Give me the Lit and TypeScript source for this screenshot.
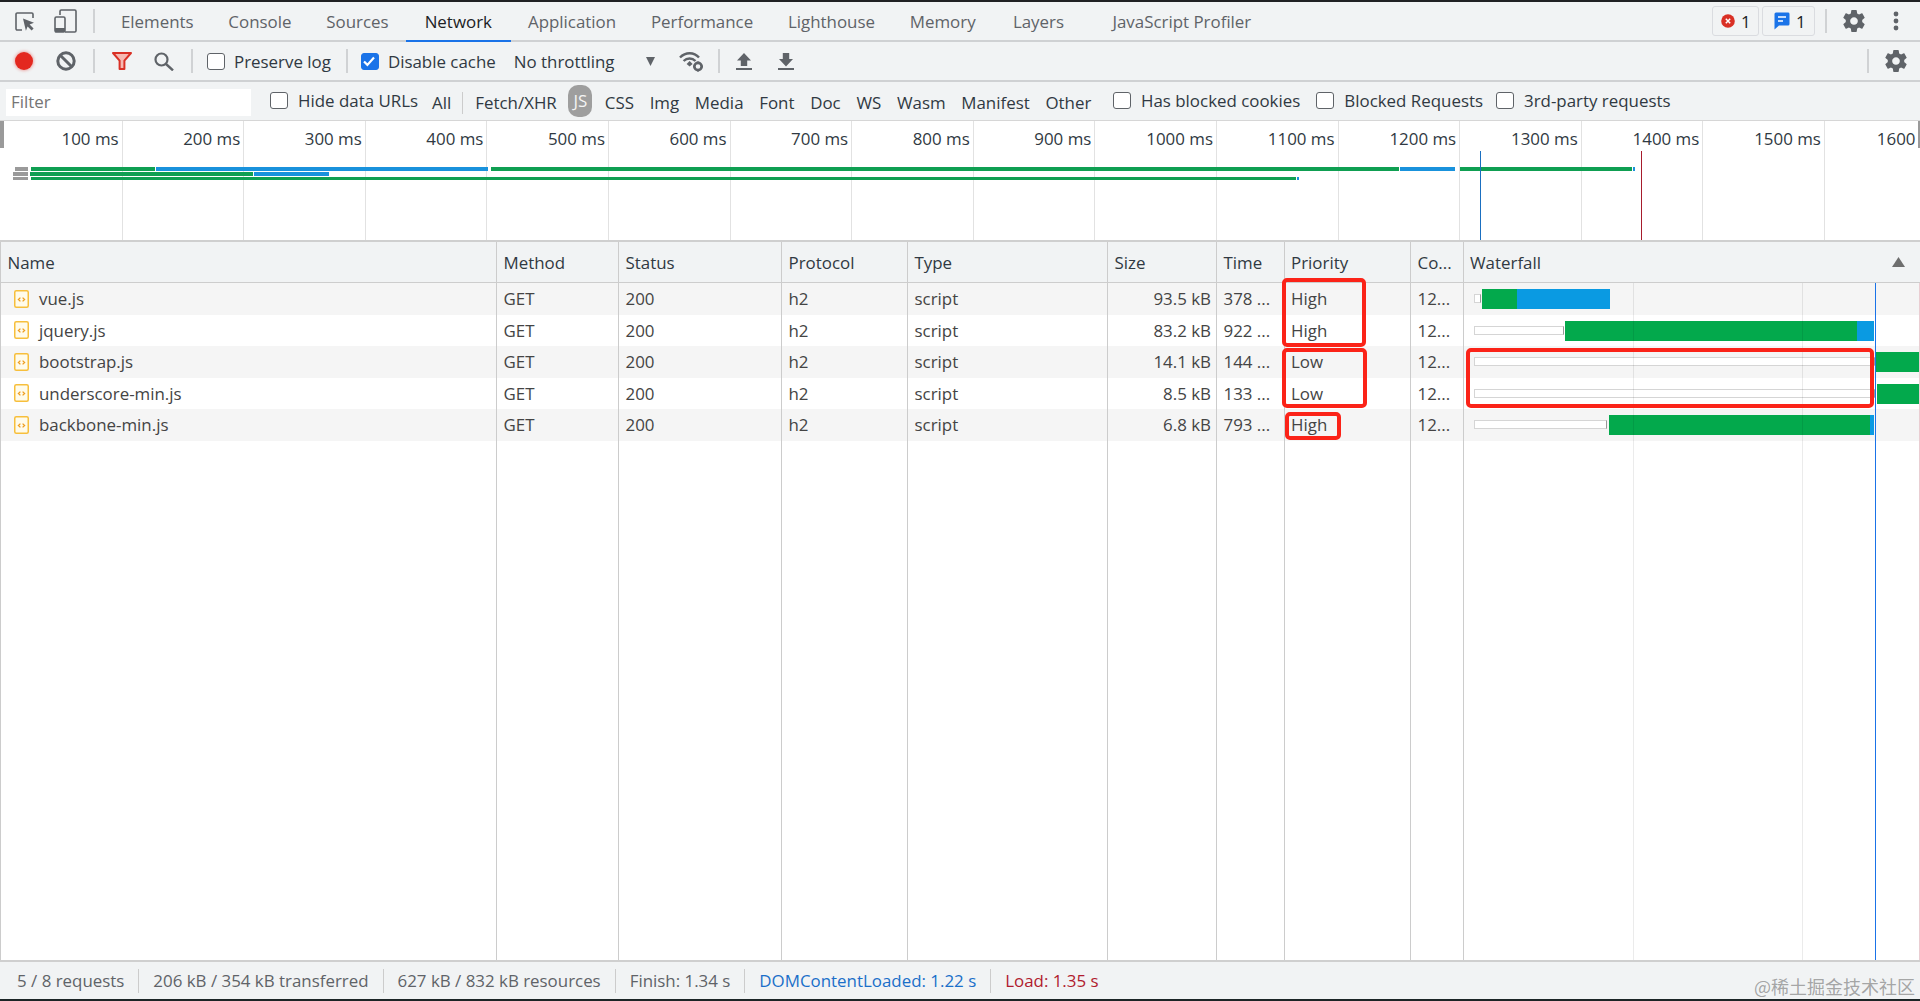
import { LitElement, html, css } from "lit";
import { customElement } from "lit/decorators.js";

const GEAR =
    "M19.43 12.98c.04-.32.07-.64.07-.98s-.03-.66-.07-.98l2.11-1.65c.19-.15.24-.42.12-.64l-2-3.46c-.12-.22-.39-.3-.61-.22l-2.49 1c-.52-.4-1.08-.73-1.69-.98l-.38-2.65C14.46 2.18 14.25 2 14 2h-4c-.25 0-.46.18-.49.42l-.38 2.65c-.61.25-1.17.59-1.69.98l-2.49-1c-.23-.09-.49 0-.61.22l-2 3.46c-.13.22-.07.49.12.64l2.11 1.65c-.04.32-.07.65-.07.98s.03.66.07.98l-2.11 1.65c-.19.15-.24.42-.12.64l2 3.46c.12.22.39.3.61.22l2.49-1c.52.4 1.08.73 1.69.98l.38 2.65c.03.24.24.42.49.42h4c.25 0 .46-.18.49-.42l.38-2.65c.61-.25 1.17-.59 1.69-.98l2.49 1c.23.09.49 0 .61-.22l2-3.46c.12-.22.07-.49-.12-.64l-2.11-1.65zM12 15.5c-1.93 0-3.5-1.57-3.5-3.5s1.57-3.5 3.5-3.5 3.5 1.57 3.5 3.5-1.57 3.5-3.5 3.5z";

const TABS = ["Elements", "Console", "Sources", "Network", "Application", "Performance", "Lighthouse", "Memory", "Layers", "JavaScript Profiler"];
const TYPES = ["Fetch/XHR", "JS", "CSS", "Img", "Media", "Font", "Doc", "WS", "Wasm", "Manifest", "Other"];
const HEADERS = ["Name", "Method", "Status", "Protocol", "Type", "Size", "Time", "Priority", "Co...", "Waterfall"];

// waterfall segments as [kind, left px, right px] in page coordinates
type Seg = [string, number, number];
const ROWS: { name: string; size: string; time: string; prio: string; segs: Seg[] }[] = [
    { name: "vue.js", size: "93.5 kB", time: "378 ...", prio: "High", segs: [["wait", 1474, 1481], ["green", 1482, 1517], ["blue", 1517, 1610]] },
    { name: "jquery.js", size: "83.2 kB", time: "922 ...", prio: "High", segs: [["wait", 1474, 1564], ["green", 1565, 1857], ["blue", 1857, 1874]] },
    { name: "bootstrap.js", size: "14.1 kB", time: "144 ...", prio: "Low", segs: [["wait", 1474, 1875], ["green", 1875, 1920]] },
    { name: "underscore-min.js", size: "8.5 kB", time: "133 ...", prio: "Low", segs: [["wait", 1474, 1875], ["green", 1877, 1920]] },
    { name: "backbone-min.js", size: "6.8 kB", time: "793 ...", prio: "High", segs: [["wait", 1474, 1607], ["green", 1609, 1870], ["blue", 1870, 1874]] },
];

// overview bars: [kind, left, right, top]
const OVERVIEW: [string, number, number, number][] = [
    ["gray", 15, 28, 46], ["green", 31, 155, 46], ["blue", 156, 488, 46], ["green", 491, 1399, 46], ["blue", 1400, 1455, 46], ["green", 1460, 1632, 46], ["blue", 1633, 1635, 46],
    ["gray", 13, 28, 51], ["green", 30, 253, 51], ["blue", 254, 329, 51],
    ["gray", 13, 28, 55.5], ["green", 31, 1296, 55.5], ["blue", 1297, 1299, 55.5],
];

// red annotation boxes drawn over the table: [left, top, right, bottom] in page coordinates
const MARKS: [number, number, number, number][] = [
    [1282, 278, 1366, 347],
    [1282, 348, 1367, 408],
    [1285, 412, 1341, 440],
    [1466, 348, 1874, 408],
];

const TABLE_TOP = 242;
const WF_LEFT = 1464;

@customElement("app-root")
export class AppRoot extends LitElement {
    private _check(checked = false) {
        return html`<span class="cb ${checked ? "on" : ""}">
            ${checked
                ? html`<svg viewBox="0 0 18 18" width="18" height="18"><path d="M4 9.5l3.4 3.4L14 5.6" fill="none" stroke="#fff" stroke-width="2.2"/></svg>`
                : ""}
        </span>`;
    }

    private _fileIcon() {
        return html`<svg class="file" viewBox="0 0 15 18" width="15" height="18">
            <rect x="0.75" y="0.75" width="13.5" height="16.5" rx="1.5" fill="#fffbea" stroke="#f7bf3c" stroke-width="1.5"/>
            <path d="M6.4 7.6L4.4 9.5l2 1.9M8.6 7.6l2 1.9-2 1.9" fill="none" stroke="#ef9d1f" stroke-width="1.3"/>
        </svg>`;
    }

    private _gear(cls: string) {
        return html`<svg class=${cls} viewBox="2 2 20 20" width="22" height="22"><path d=${GEAR} fill="#5f6368"/></svg>`;
    }

    private _tabBar() {
        return html`<div class="tabbar">
            <svg class="ic-inspect" viewBox="0 0 20 19" width="20" height="19">
                <path d="M7 18H2.2A1.2 1.2 0 0 1 1 16.8V2.2A1.2 1.2 0 0 1 2.2 1h14.6A1.2 1.2 0 0 1 18 2.2V6" fill="none" stroke="#5f6368" stroke-width="1.6"/>
                <path d="M8 6.5l11 4.2-4.4 1.7 4 4.2-2 2-4-4.2-1.7 4.4z" fill="#5f6368"/>
            </svg>
            <svg class="ic-device" viewBox="0 0 23 24" width="23" height="24">
                <path d="M6 6V2.2A1.2 1.2 0 0 1 7.2 1h13.6A1.2 1.2 0 0 1 22 2.2v19.6a1.2 1.2 0 0 1-1.2 1.2H11" fill="none" stroke="#5f6368" stroke-width="1.6"/>
                <rect x="1" y="8" width="10" height="15" rx="1.4" fill="none" stroke="#5f6368" stroke-width="1.6"/>
                <rect x="1" y="19" width="10" height="4" fill="#5f6368"/>
            </svg>
            <span class="sep tall tab-sep"></span>
            <div class="tabs">
                ${TABS.map((t) => html`<span class="tab ${t === "Network" ? "active" : ""} ${t === "Layers" ? "wide" : ""}">${t}</span>`)}
            </div>
            <span class="badge err">
                <svg viewBox="0 0 14 14" width="14" height="14"><circle cx="7" cy="7" r="6.8" fill="#d93025"/><path d="M4.8 4.8l4.4 4.4M9.2 4.8L4.8 9.2" stroke="#fff" stroke-width="1.5"/></svg>
                1
            </span>
            <span class="badge msg">
                <svg viewBox="0 0 16 18" width="16" height="18"><path d="M2 0.5h12A1.5 1.5 0 0 1 15.5 2v10a1.5 1.5 0 0 1-1.5 1.5H5L0.5 17.5V2A1.5 1.5 0 0 1 2 0.5z" fill="#1a73e8"/><path d="M4 5h8M4 9h5" stroke="#fff" stroke-width="1.6"/></svg>
                1
            </span>
            <span class="sep tall top-sep"></span>
            ${this._gear("gear-top")}
            <svg class="dots" viewBox="0 0 6 20" width="6" height="20"><circle cx="3" cy="3" r="2.4" fill="#5f6368"/><circle cx="3" cy="10" r="2.4" fill="#5f6368"/><circle cx="3" cy="17" r="2.4" fill="#5f6368"/></svg>
        </div>`;
    }

    private _toolbar() {
        return html`<div class="toolbar">
            <span class="record"></span>
            <svg class="ic-clear" viewBox="0 0 20 20" width="20" height="20"><circle cx="10" cy="10" r="8.2" fill="none" stroke="#5f6368" stroke-width="3"/><path d="M4.2 4.2l11.6 11.6" stroke="#5f6368" stroke-width="3"/></svg>
            <span class="sep tall sep-a"></span>
            <svg class="ic-funnel" viewBox="0 0 20 18" width="20" height="18"><path d="M1 1h18l-6.6 7.6V17H7.6V8.6z" fill="#f6b9b2" stroke="#d93025" stroke-width="2" stroke-linejoin="round"/></svg>
            <svg class="ic-search" viewBox="0 0 20 19" width="20" height="19"><circle cx="7.5" cy="7.5" r="6" fill="none" stroke="#5f6368" stroke-width="2.2"/><path d="M12 12l7 6.4" stroke="#5f6368" stroke-width="2.4"/></svg>
            <span class="sep tall sep-b"></span>
            ${this._check()}
            <span class="lbl">Preserve log</span>
            <span class="sep tall sep-c"></span>
            ${this._check(true)}
            <span class="lbl">Disable cache</span>
            <span class="lbl lbl-throttle">No throttling</span>
            <svg class="ic-caret" viewBox="0 0 9 9" width="9" height="9"><path d="M0 0h9L4.5 9z" fill="#5f6368"/></svg>
            <svg class="ic-wifi" viewBox="0 0 25 21" width="25" height="21">
                <path d="M1 6.5C6.5 0.8 15 0.8 20 6.5M4.6 10C8 6.6 13.2 6.6 16.5 10" fill="none" stroke="#5f6368" stroke-width="2.4"/>
                <path d="M7.6 13l3-3 3 3-3 2.6z" fill="#5f6368"/>
                <circle cx="19" cy="15.5" r="3.6" fill="none" stroke="#5f6368" stroke-width="2.6"/>
                <path d="M19 10.5v2M19 18.5v2M14 15.5h2M22 15.5h2" stroke="#5f6368" stroke-width="2"/>
            </svg>
            <span class="sep tall sep-d"></span>
            <svg class="ic-arrow first" viewBox="0 0 16 17" width="16" height="17"><path d="M8 0l7 7.5h-3.8V13H4.8V7.5H1z" fill="#5f6368"/><path d="M0 16h16" stroke="#5f6368" stroke-width="2"/></svg>
            <svg class="ic-arrow second" viewBox="0 0 16 17" width="16" height="17"><path d="M8 13.5L1 6h3.8V0h6.4v6H15z" fill="#5f6368"/><path d="M0 16h16" stroke="#5f6368" stroke-width="2"/></svg>
            <span class="sep tall sep-e"></span>
            ${this._gear("gear-tool")}
        </div>`;
    }

    private _filterBar() {
        return html`<div class="filterbar">
            <span class="filter">Filter</span>
            ${this._check()}
            <span class="lbl lbl-urls">Hide data URLs</span>
            <span class="type all">All</span>
            <span class="sep type-sep"></span>
            <div class="types">
                ${TYPES.map((t) => html`<span class="type ${t === "JS" ? "sel" : ""}">${t}</span>`)}
            </div>
            ${this._check()}
            <span class="lbl lbl-cookies">Has blocked cookies</span>
            ${this._check()}
            <span class="lbl lbl-blocked">Blocked Requests</span>
            ${this._check()}
            <span class="lbl">3rd-party requests</span>
        </div>`;
    }

    private _overview() {
        const ticks = Array.from({ length: 16 }, (_, i) => (i + 1) * 100);
        return html`<div class="overview">
            ${ticks.map((t) =>
                t === 1600
                    ? html`<span class="tick last">1600</span>`
                    : html`<span class="tick">${t} ms</span>`,
            )}
            ${OVERVIEW.map(
                ([kind, l, r, top]) => html`<i class="ov ${kind}" style="left:${l}px;width:${r - l}px;top:${top}px"></i>`,
            )}
            <i class="ov-line dcl"></i>
            <i class="ov-line load"></i>
            <i class="thumb left"></i>
            <i class="thumb right"></i>
        </div>`;
    }

    private _table() {
        return html`<div class="table">
            <div class="grid head">
                ${HEADERS.map((h) => html`<span class="cell">${h}</span>`)}
                <svg class="sort" viewBox="0 0 13 10" width="13" height="10"><path d="M6.5 0L13 10H0z" fill="#6e6e6e"/></svg>
            </div>
            ${ROWS.map(
                (r) => html`<div class="grid row">
                    <span class="cell name">${this._fileIcon()}${r.name}</span>
                    <span class="cell">GET</span>
                    <span class="cell">200</span>
                    <span class="cell">h2</span>
                    <span class="cell">script</span>
                    <span class="cell num">${r.size}</span>
                    <span class="cell">${r.time}</span>
                    <span class="cell">${r.prio}</span>
                    <span class="cell">12...</span>
                    <span class="cell wf">
                        ${r.segs.map(
                            ([kind, a, b]) => html`<i class="seg ${kind}" style="left:${a - WF_LEFT}px;width:${b - a}px"></i>`,
                        )}
                    </span>
                </div>`,
            )}
            <div class="grid filler">
                ${HEADERS.map(() => html`<span class="cell"></span>`)}
            </div>
            <i class="wf-line" style="left:1633px"></i>
            <i class="wf-line" style="left:1802px"></i>
            <i class="wf-line dcl"></i>
            <i class="wf-line load"></i>
            ${MARKS.map(
                ([l, t, r, b]) => html`<i class="mark" style="left:${l}px;top:${t - TABLE_TOP}px;width:${r - l}px;height:${b - t}px"></i>`,
            )}
        </div>`;
    }

    private _footer() {
        return html`<div class="footer">
            <span>5 / 8 requests</span>
            <span>206 kB / 354 kB transferred</span>
            <span>627 kB / 832 kB resources</span>
            <span>Finish: 1.34 s</span>
            <span class="blue">DOMContentLoaded: 1.22 s</span>
            <span class="red">Load: 1.35 s</span>
            <span class="watermark">@稀土掘金技术社区</span>
        </div>`;
    }

    render() {
        return html`<div class="app">
            ${this._tabBar()} ${this._toolbar()} ${this._filterBar()} ${this._overview()} ${this._table()} ${this._footer()}
        </div>`;
    }

    static styles = css`
        :host {
            display: block;
            height: 1001px;
            overflow: hidden;
        }
        .app {
            height: 1001px;
            box-sizing: border-box;
            display: flex;
            flex-direction: column;
            border-top: 2px solid #202124;
            border-bottom: 2px solid #1c2526;
            background: #fff;
            font-family: "Open Sans", "Noto Sans", sans-serif;
            font-size: 16.9px;
            color: #303942;
        }
        svg {
            flex: none;
            display: block;
        }
        .sep {
            flex: none;
            width: 1px;
            height: 22px;
            background: #ccc;
        }
        .sep.tall {
            width: 2px;
            height: 24px;
            background: #d0d2d4;
        }

        /* tab strip */
        .tabbar,
        .toolbar {
            display: flex;
            align-items: center;
            flex: none;
            background: #f1f3f4;
            box-sizing: border-box;
            border-bottom: 2px solid #cfd1d3;
            padding-left: 15px;
        }
        .tabbar {
            height: 40px;
        }
        .ic-inspect {
            margin-right: 19px;
        }
        .tab-sep {
            margin-left: 16px;
            margin-right: 8.5px;
        }
        .tabs {
            display: flex;
            align-self: stretch;
            flex: 1;
        }
        .tab {
            display: flex;
            align-items: center;
            padding: 0 17.4px;
            margin-bottom: -2px;
            color: #5f6368;
            white-space: nowrap;
            border-bottom: 2px solid transparent;
        }
        .tab.active {
            color: #202124;
            padding: 0 18.7px;
            border-bottom-color: #1a73e8;
        }
        .tab.wide {
            margin-left: 2.5px;
            padding-right: 31px;
        }
        .badge {
            box-sizing: border-box;
            height: 30px;
            display: flex;
            align-items: center;
            border: 1px solid #dadce0;
            border-radius: 3px;
            color: #202124;
        }
        .badge.err {
            width: 47px;
            padding-left: 8px;
            gap: 6px;
        }
        .badge.msg {
            width: 53px;
            margin-left: 3px;
            padding-left: 11px;
            gap: 6px;
        }
        .top-sep {
            width: 1px;
            margin-left: 10px;
            margin-right: 16px;
        }
        .dots {
            margin-left: 28px;
            margin-right: 21px;
        }

        /* record toolbar */
        .toolbar {
            height: 40px;
        }
        .record {
            flex: none;
            width: 18px;
            height: 18px;
            border-radius: 50%;
            background: #e3281f;
            box-shadow: 0 0 3px 1px rgba(227, 40, 31, 0.35);
        }
        .ic-clear {
            margin-left: 23px;
        }
        .sep-a {
            margin-left: 17px;
            margin-right: 17px;
        }
        .ic-search {
            margin-left: 22px;
        }
        .sep-b {
            margin-left: 17px;
            margin-right: 14px;
        }
        .lbl {
            white-space: nowrap;
            margin-left: 10px;
            color: #303942;
        }
        .toolbar .lbl {
            margin-left: 9px;
        }
        .sep-c {
            margin-left: 15px;
            margin-right: 13px;
        }
        .toolbar .lbl-throttle {
            margin-left: 18px;
        }
        .ic-caret {
            margin-left: 31px;
        }
        .ic-wifi {
            margin-left: 24px;
        }
        .sep-d {
            width: 1px;
            margin-left: 14px;
        }
        .ic-arrow.first {
            margin-left: 16px;
        }
        .ic-arrow.second {
            margin-left: 26px;
        }
        .sep-e {
            width: 1px;
            margin-left: auto;
        }
        .gear-tool {
            margin-left: 16px;
            margin-right: 13px;
        }
        .cb {
            flex: none;
            box-sizing: border-box;
            width: 18px;
            height: 17px;
            border: 1.5px solid #5f6368;
            border-radius: 3px;
            background: #fff;
            position: relative;
        }
        .cb.on {
            background: #1a73e8;
            border-color: #1a73e8;
        }
        .cb.on svg {
            position: absolute;
            left: -1.5px;
            top: -1.5px;
        }

        /* filter bar */
        .filterbar {
            display: flex;
            align-items: center;
            flex: none;
            height: 38px;
            box-sizing: border-box;
            background: #f1f3f4;
            padding-left: 6px;
        }
        .filterbar .cb,
        .filterbar .lbl {
            margin-top: -2px;
        }
        .filter {
            flex: none;
            box-sizing: border-box;
            width: 245px;
            height: 27px;
            line-height: 25px;
            padding-left: 5px;
            margin-top: 3px;
            margin-right: 19px;
            background: #fff;
            color: #757575;
        }
        .lbl-urls {
            margin-right: 14px;
        }
        .type {
            white-space: nowrap;
            margin-top: 3px;
        }
        .type-sep {
            margin-left: 11px;
            margin-right: 7px;
            margin-top: 3px;
        }
        .types {
            display: flex;
            align-items: center;
            margin-right: 11px;
        }
        .types .type {
            padding: 0 5px;
            margin-right: 5.7px;
        }
        .types .type.sel {
            height: 32px;
            line-height: 32px;
            box-sizing: border-box;
            border-radius: 10px;
            background: #9e9e9e;
            color: #f4f4f4;
            margin: 0 7.5px 0 1px;
        }
        .lbl-cookies {
            margin-right: 16px;
        }
        .lbl-blocked {
            margin-right: 13px;
        }

        /* overview */
        .overview {
            flex: none;
            position: relative;
            height: 122px;
            box-sizing: border-box;
            display: flex;
            padding-left: 1px;
            border-top: 1px solid #d6d6d6;
            border-bottom: 2px solid #cfcfcf;
            background: #fff;
            overflow: hidden;
        }
        .tick {
            flex: none;
            box-sizing: border-box;
            width: 121.6px;
            height: 100%;
            padding: 6px 3px 0 0;
            text-align: right;
            white-space: nowrap;
            border-right: 1px solid #e2e2e2;
        }
        .tick.last {
            padding-right: 30px;
        }
        .ov {
            position: absolute;
            height: 3.5px;
        }
        .ov.gray {
            background: #9a9a9a;
        }
        .ov.green {
            background: #0f9f52;
        }
        .ov.blue {
            background: #1992dc;
        }
        .ov-line {
            position: absolute;
            top: 30px;
            bottom: 0;
            width: 1px;
        }
        .ov-line.dcl {
            left: 1480px;
            background: #1a6fc0;
        }
        .ov-line.load {
            left: 1641px;
            background: #a61c2c;
        }
        .thumb {
            position: absolute;
            top: 0;
            height: 27px;
            background: #9a9a9a;
        }
        .thumb.left {
            left: 0;
            width: 4px;
        }
        .thumb.right {
            right: 0;
            width: 2px;
        }

        /* request table */
        .table {
            flex: 1;
            min-height: 0;
            position: relative;
            display: flex;
            flex-direction: column;
            border-left: 1px solid #ccc;
        }
        .grid {
            display: grid;
            grid-template-columns: 496px 122px 163px 126px 200px 109px 67.5px 126.5px 52.5px 1fr;
            flex: none;
            position: relative;
        }
        .cell {
            box-sizing: border-box;
            padding: 0 6px 0 6.5px;
            display: flex;
            align-items: center;
            white-space: nowrap;
            overflow: hidden;
            border-right: 1px solid #ccc;
            color: #444;
        }
        .cell:last-of-type {
            border-right: none;
        }
        .head {
            height: 41px;
            background: #f1f3f4;
            border-bottom: 1px solid #cdcdcd;
            box-sizing: border-box;
        }
        .head .cell {
            color: #303942;
        }
        .sort {
            position: absolute;
            right: 15px;
            top: 15px;
        }
        .row {
            height: 31.5px;
        }
        .row:nth-of-type(even) {
            background: #f5f5f5;
        }
        .cell.num {
            justify-content: flex-end;
            padding-right: 5px;
        }
        .cell.name {
            padding-left: 13px;
        }
        .file {
            margin-right: 10px;
        }
        .cell.wf {
            position: relative;
            padding: 0;
        }
        .seg {
            position: absolute;
            top: 6px;
            height: 20px;
        }
        .seg.green {
            background: #03a94c;
        }
        .seg.blue {
            background: #0a9ae2;
        }
        .seg.wait {
            top: 11px;
            height: 9px;
            box-sizing: border-box;
            background: #fff;
            border: 1px solid #d5d5d5;
            border-right-color: #999;
        }
        .filler {
            flex: 1;
        }
        .wf-line {
            position: absolute;
            top: 41px;
            bottom: 0;
            width: 1px;
            margin-left: -1px;
            background: rgba(0, 0, 0, 0.08);
        }
        .wf-line.dcl {
            left: 1875px;
            background: #1a73e8;
        }
        .wf-line.load {
            left: 1919px;
            background: #eacdd2;
        }
        .mark {
            position: absolute;
            margin-left: -1px;
            box-sizing: border-box;
            border: 4.5px solid #fb2318;
            border-radius: 5px;
        }

        /* status bar */
        .footer {
            flex: none;
            position: relative;
            height: 39px;
            box-sizing: border-box;
            display: flex;
            align-items: center;
            background: #f1f3f4;
            border-top: 2px solid #cfcfcf;
            padding-left: 3px;
            color: #5f6368;
        }
        .footer > span {
            padding: 0 14px;
            white-space: nowrap;
            line-height: 24px;
            border-right: 1px solid #ccc;
        }
        .footer .blue {
            color: #1a6fc9;
        }
        .footer .red {
            color: #b01b2e;
            border-right: none;
        }
        .footer .watermark {
            position: absolute;
            right: 5px;
            top: 12px;
            padding: 0;
            border: none;
            font-family: "Noto Sans CJK SC", sans-serif;
            font-size: 18px;
            color: rgba(120, 120, 120, 0.65);
        }
    `;
}

declare global {
    interface HTMLElementTagNameMap {
        "app-root": AppRoot;
    }
}
